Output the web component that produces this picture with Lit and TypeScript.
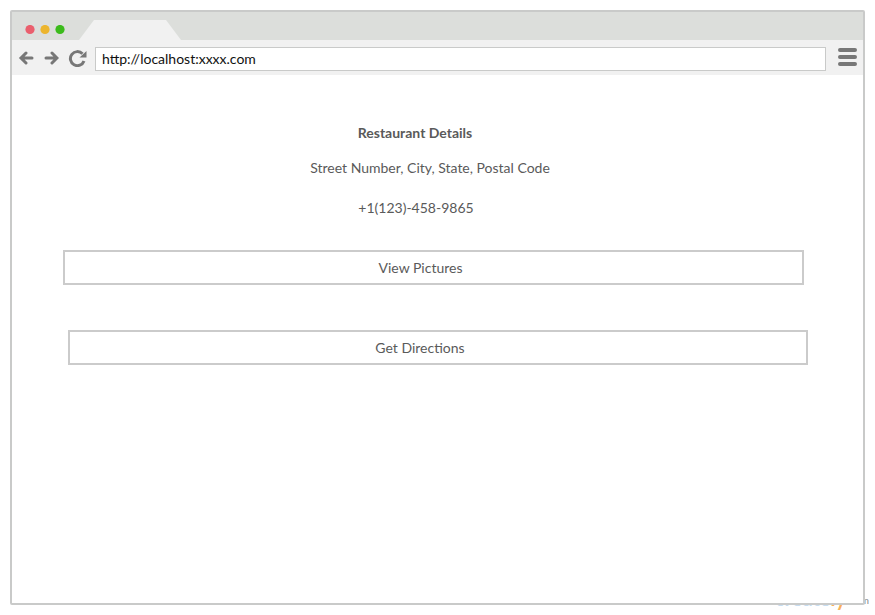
import { LitElement, html, css, svg } from "lit";
import { customElement } from "lit/decorators.js";

const backIcon = svg`<path d="M3.500 7H14M8 2 3 7l5 5" stroke-linecap="round" />`;
const forwardIcon = svg`<path d="M3 7h10.500M9 2 14 7l-5 5" stroke-linecap="round" />`;
const light = (fill: string) =>
  html`<svg width="10" height="10"><circle cx="5" cy="4.500" r="4.600" fill=${fill} /></svg>`;

@customElement("app-root")
export class AppRoot extends LitElement {
  static styles = css`
    :host {
      display: block;
      position: relative;
      box-sizing: border-box;
      min-height: 100vh;
      padding: 10px;
      background: #fff;
      color: #5a5a5a;
      font: 14px/20px Lato, "Liberation Sans", sans-serif;
    }
    * {
      box-sizing: border-box;
    }
    .window {
      position: relative;
      min-height: calc(100vh - 20px);
      border: 2px solid #c9cac9;
      border-radius: 2px;
      background: #fff;
    }
    .tabs {
      display: flex;
      align-items: flex-end;
      height: 28px;
      padding-left: 13px;
      background: #dcdedb;
    }
    .lights {
      display: flex;
      gap: 5px;
      padding-bottom: 5px;
    }
    .tab {
      width: 102px;
      height: 20px;
      margin-left: 14px;
      background: #f1f1f1;
      clip-path: polygon(15px 0, 87px 0, 100% 100%, 0 100%);
    }
    .toolbar {
      display: flex;
      align-items: center;
      height: 35px;
      padding: 0 6px;
      background: #f1f1f1;
    }
    .tool {
      display: flex;
      padding: 0;
      border: 0;
      background: none;
      color: #777;
    }
    .tool svg {
      fill: none;
      stroke: currentColor;
      stroke-width: 3;
    }
    .history {
      display: flex;
      align-items: center;
      gap: 9px;
      margin: 1px 7px 0 0;
    }
    .address {
      flex: 1;
      min-width: 0;
      height: 24px;
      margin: 2px 12px 0 0;
      padding: 0 6px;
      border: 1px solid #c9cac9;
      border-radius: 0;
      background: #fff;
      color: #111;
      font: inherit;
    }
    .page {
      display: flex;
      flex-direction: column;
      padding: 48px 55px 48px 56px;
      text-align: center;
    }
    h1,
    p {
      margin: 0;
      font-size: 14px;
    }
    h1 {
      padding-right: 46px;
    }
    .street {
      margin-top: 15px;
      padding-right: 16px;
    }
    .phone {
      margin-top: 20px;
      padding-right: 44px;
    }
    .action {
      height: 35px;
      border: 2px solid #cbcbcb;
      background: #fff;
      color: inherit;
      font: inherit;
    }
    .pictures {
      margin: 32px 4px 0 -5px;
      padding: 0 26px 0 0;
    }
    .directions {
      margin-top: 45px;
      padding: 0 36px 0 0;
    }
    .credit {
      position: absolute;
      right: 6px;
      bottom: 7px;
      display: flex;
      align-items: flex-end;
      color: #c6dcf0;
      font-size: 20px;
      font-weight: 700;
      text-decoration: none;
    }
    .accent {
      color: #fbb158;
    }
    .domain {
      margin: 0 0 3px 2px;
      color: #888;
      font-size: 10px;
      font-weight: 400;
      line-height: 10px;
    }
  `;

  render() {
    return html`
      <a class="credit" href="#">create<span class="accent">ly</span><span class="domain">.com</span></a>
      <div class="window">
        <div class="tabs">
          <div class="lights">${light("#ea5f6d")}${light("#ecb52d")}${light("#3bbb1b")}</div>
          <div class="tab"></div>
        </div>
        <div class="toolbar">
          <div class="history">
            <button class="tool" aria-label="Back">
              <svg width="16" height="14">${backIcon}</svg>
            </button>
            <button class="tool" aria-label="Forward">
              <svg width="16" height="14">${forwardIcon}</svg>
            </button>
            <button class="tool" aria-label="Reload">
              <svg width="20" height="18">
                <path d="M14.500 4.800A7 7 0 1 0 16 12" />
                <path d="M18.500 2v6.500h-7z" fill="currentColor" stroke="none" />
              </svg>
            </button>
          </div>
          <input class="address" type="text" aria-label="Address" value="http://localhost:xxxx.com" />
          <button class="tool" aria-label="Menu">
            <svg width="19" height="20">
              <path d="M2 2h15M2 9h15M2 16h15" stroke-width="4" stroke-linecap="round" />
            </svg>
          </button>
        </div>
        <main class="page">
          <h1>Restaurant Details</h1>
          <p class="street">Street Number, City, State, Postal Code</p>
          <p class="phone">+1(123)-458-9865</p>
          <button class="action pictures">View Pictures</button>
          <button class="action directions">Get Directions</button>
        </main>
      </div>
    `;
  }
}
